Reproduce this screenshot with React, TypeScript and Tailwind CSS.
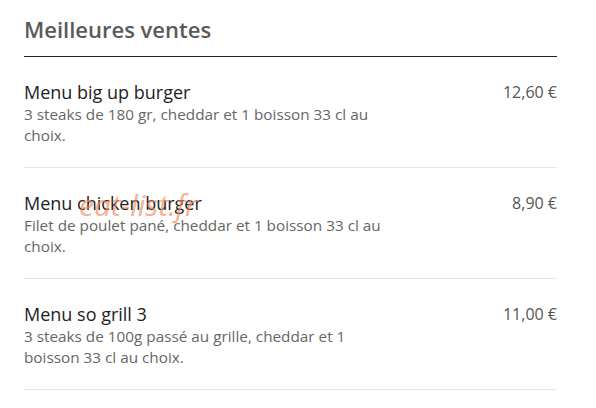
const items = [
  {
    name: "Menu big up burger",
    desc: "3 steaks de 180 gr, cheddar et 1 boisson 33 cl au choix.",
    price: "12,60 €",
  },
  {
    name: "Menu chicken burger",
    desc: "Filet de poulet pané, cheddar et 1 boisson 33 cl au choix.",
    price: "8,90 €",
  },
  {
    name: "Menu so grill 3",
    desc: "3 steaks de 100g passé au grille, cheddar et 1 boisson 33 cl au choix.",
    price: "11,00 €",
  },
];

function App() {
  return (
    <div
      className="relative w-[596px] h-[408px] bg-white overflow-hidden"
      style={{ fontFamily: '"Open Sans", "Noto Sans", sans-serif' }}
    >
      <div className="pl-6 pr-[39px] pt-[14px]">
        <h2 className="text-[22px] leading-[30px] font-semibold text-[#5a5a5a] pb-[12px] border-b border-[#222]">
          Meilleures ventes
        </h2>
        {items.map((item) => (
          <div
            key={item.name}
            className="flex justify-between pt-[23px] pb-[21px] border-b border-[#e6e6e6]"
          >
            <div className="w-[374px]">
              <div className="text-[18px] leading-[24px] text-[#222]">
                {item.name}
              </div>
              <div className="text-[15.3px] leading-[21px] text-[#666]">
                {item.desc}
              </div>
            </div>
            <div className="text-[16px] leading-[24px] font-medium text-[#555]">
              {item.price}
            </div>
          </div>
        ))}
      </div>
      <div className="absolute left-[79px] top-[187px] text-[30px] leading-[36px] italic text-[#f08a5d] opacity-65 pointer-events-none">
        eat-list.fr
      </div>
    </div>
  );
}

export default App;
